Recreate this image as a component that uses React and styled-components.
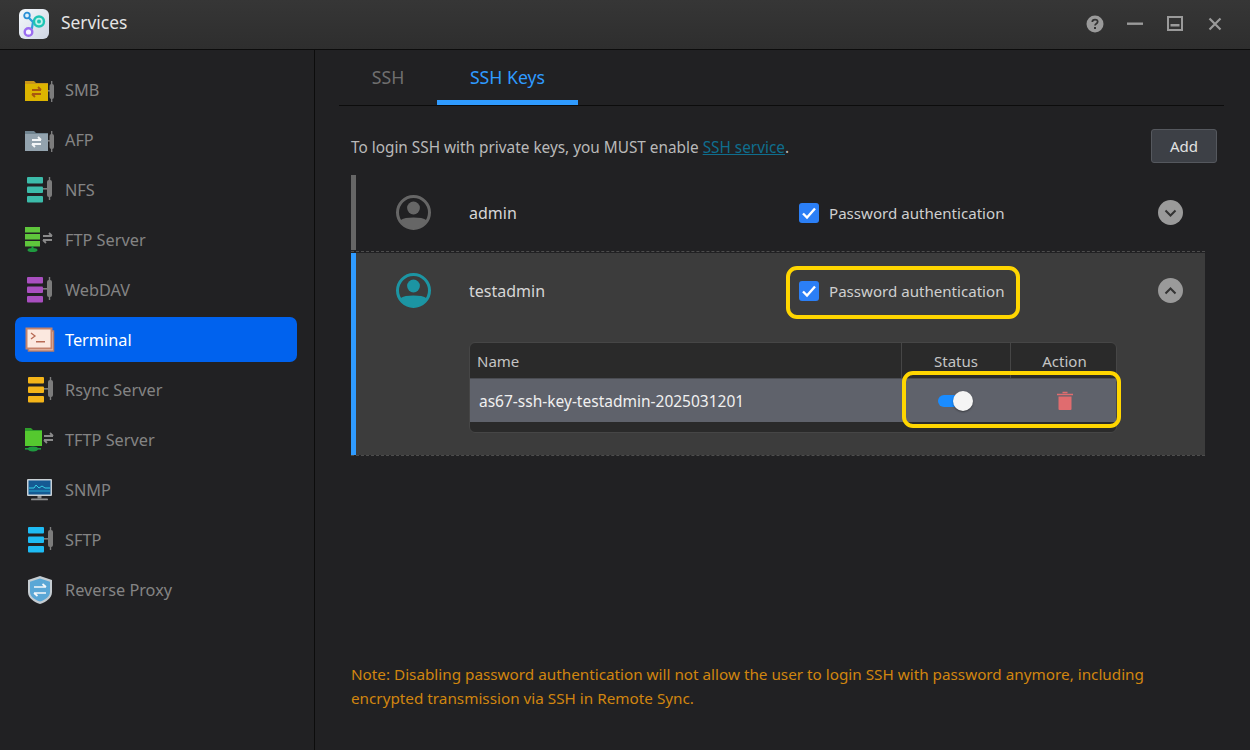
import React from "react";
import styled, { createGlobalStyle } from "styled-components";

const GlobalStyle = createGlobalStyle`
  html, body {
    margin: 0;
    padding: 0;
    background: #212123;
  }
  * {
    box-sizing: border-box;
  }
`;

const Window = styled.div`
  width: 1250px;
  height: 750px;
  display: flex;
  flex-direction: column;
  overflow: hidden;
  background: #212123;
  font-family: "Noto Sans", "Open Sans", sans-serif;
`;

const TitleBar = styled.header`
  height: 50px;
  flex: none;
  display: flex;
  align-items: center;
  padding: 0 15px 1px 19px;
  background: linear-gradient(#363636, #2e2e2e);
  border-bottom: 1px solid #0c0c0c;
`;

const AppName = styled.h1`
  margin: 0 0 4px 12px;
  font-size: 17.4px;
  font-weight: 400;
  color: #e4e4e4;
`;

const WindowControls = styled.div`
  margin-left: auto;
  display: flex;
  align-items: center;
`;

const ControlButton = styled.span`
  width: 40px;
  height: 30px;
  display: flex;
  align-items: center;
  justify-content: center;
`;

const Columns = styled.div`
  flex: 1;
  display: flex;
  min-height: 0;
`;

const Sidebar = styled.nav`
  width: 315px;
  flex: none;
  display: flex;
  flex-direction: column;
  gap: 5px;
  padding: 17px 17px 0 15px;
  border-right: 1px solid #0c0c0c;
`;

const NavItem = styled.div`
  height: 45px;
  display: flex;
  align-items: center;
  gap: 9px;
  padding-left: 9px;
  border-radius: 7px;
  font-size: 16.3px;
  color: ${({ $active }) => ($active ? "#ffffff" : "#848484")};
  background: ${({ $active }) => ($active ? "#0062ee" : "transparent")};
`;

const Main = styled.main`
  flex: 1;
  display: flex;
  flex-direction: column;
  padding: 0 26px 40px 24px;
  min-width: 0;
`;

const Tabs = styled.div`
  display: flex;
  height: 56px;
  flex: none;
  border-bottom: 1px solid #0c0c0c;
`;

const Tab = styled.div`
  height: 55px;
  width: ${({ $active }) => ($active ? "141px" : "98px")};
  display: flex;
  align-items: center;
  justify-content: center;
  padding-top: 4px;
  font-size: 17.7px;
  color: ${({ $active }) => ($active ? "#2f9bff" : "#6f6f6f")};
  border-bottom: 5px solid ${({ $active }) => ($active ? "#2f9bff" : "transparent")};
`;

const Body = styled.div`
  flex: 1;
  display: flex;
  flex-direction: column;
  padding: 0 7px 0 12px;
`;

const Toolbar = styled.div`
  display: flex;
  align-items: center;
  justify-content: space-between;
  margin-top: 23px;
  margin-bottom: 12px;
`;

const Hint = styled.p`
  margin: 0;
  padding-top: 1px;
  font-size: 15.35px;
  color: #b9b9b9;
`;

const HintLink = styled.a`
  color: #0f6e8e;
  text-decoration: underline;
`;

const AddButton = styled.button`
  width: 66px;
  height: 34px;
  border: 1px solid #55585e;
  border-radius: 3px;
  background: #3d4046;
  color: #e2e2e2;
  font-family: inherit;
  font-size: 15px;
`;

const Users = styled.div`
  margin-right: 12px;
`;

const UserRow = styled.section`
  padding-bottom: ${({ $open }) => ($open ? "0" : "1px")};
  margin-bottom: ${({ $open }) => ($open ? "0" : "1px")};
  border-bottom: 1px dashed #4d4d4d;
`;

const UserPanel = styled.div`
  border-left: 5px solid ${({ $open }) => ($open ? "#2f9bff" : "#666666")};
  background: ${({ $open }) => ($open ? "#3c3c3c" : "transparent")};
  padding-bottom: ${({ $open }) => ($open ? "22px" : "0")};
`;

const UserHead = styled.div`
  height: 75px;
  display: flex;
  align-items: center;
  padding: 0 22px 0 40px;
`;

const UserName = styled.div`
  width: 330px;
  margin-left: 38px;
  font-size: 16px;
  color: #d6d6d6;
`;

const CheckField = styled.label`
  position: relative;
  display: flex;
  align-items: center;
  gap: 10px;
  font-size: 15.1px;
  color: #cfcfcf;

  ${({ $marked }) =>
    $marked &&
    `
    &::after {
      content: "";
      position: absolute;
      inset: -15px -16px -18px -13px;
      border: 4px solid #ffd600;
      border-radius: 11px;
    }
  `}
`;

const CheckBox = styled.span`
  width: 20px;
  height: 20px;
  display: flex;
  align-items: center;
  justify-content: center;
  border-radius: 3px;
  background: #2b7ff6;
`;

const RoundToggle = styled.span`
  margin-left: auto;
  width: 25px;
  height: 25px;
  display: flex;
  align-items: center;
  justify-content: center;
  border-radius: 50%;
  background: #9a9a9a;
`;

const KeyTable = styled.div`
  margin: 14px 88px 0 113px;
  height: 91px;
  border: 1px solid #464646;
  border-radius: 6px;
  background: #2a2a2a;
  display: flex;
  flex-direction: column;
`;

const HeadRow = styled.div`
  height: 36px;
  flex: none;
  display: grid;
  grid-template-columns: 431px 109px 1fr;
  border-bottom: 1px solid #4a4c52;
`;

const HeadCell = styled.div`
  display: flex;
  align-items: center;
  justify-content: ${({ $center }) => ($center ? "center" : "flex-start")};
  padding: 1px 0 0 ${({ $pad }) => $pad || "0"};
  font-size: 15px;
  color: #c4c4c4;
  border-left: ${({ $center }) => ($center ? "1px solid #464646" : "none")};
`;

const KeyRow = styled.div`
  height: 43px;
  flex: none;
  display: flex;
  background: #5f626b;
`;

const KeyName = styled.div`
  width: 431px;
  padding: 1px 0 0 9px;
  display: flex;
  align-items: center;
  font-size: 15.5px;
  color: #f0f0f0;
`;

const KeyCells = styled.div`
  position: relative;
  flex: 1;
  display: grid;
  grid-template-columns: 109px 1fr;

  &::after {
    content: "";
    position: absolute;
    inset: -8px -5px -6px 1px;
    border: 4px solid #ffd600;
    border-radius: 11px;
  }
`;

const KeyCell = styled.div`
  display: flex;
  align-items: center;
  justify-content: center;
  padding-left: ${({ $pad }) => $pad || "0"};
`;

const Switch = styled.span`
  position: relative;
  width: 35px;
  height: 12px;
`;

const SwitchTrack = styled.span`
  display: block;
  width: 28px;
  height: 12px;
  border-radius: 6px;
  background: #1a8cff;
`;

const SwitchKnob = styled.span`
  position: absolute;
  top: -4px;
  right: 0;
  width: 20px;
  height: 20px;
  border-radius: 50%;
  background: #f5f5f5;
  box-shadow: 0 1px 2px rgba(0, 0, 0, 0.4);
`;

const Note = styled.p`
  margin: auto 0 0;
  font-size: 15.27px;
  line-height: 24px;
  color: #d1860f;
`;

const IconBox = styled.span`
  width: 32px;
  height: 30px;
  flex: none;
  display: block;

  svg {
    display: block;
  }
`;

const Connector = ({ x = 19 }) => (
  <g fill="#7c7c7c">
    <rect x={x} y="13" width="5" height="1.6" />
    <rect x={x + 4} y="5" width="5" height="17" rx="2" />
    <rect x={x + 5.8} y="2" width="1.4" height="23" />
  </g>
);

const Swap = ({ x = 20, y = 9, color = "#8a8a8a" }) => (
  <g fill="none" stroke={color} strokeWidth="1.8">
    <path d={`M${x} ${y + 3}h9M${x + 6} ${y}l3 3`} />
    <path d={`M${x + 9} ${y + 7}h-9M${x + 3} ${y + 10}l-3-3`} />
  </g>
);

const Stack = ({ color, x = 3 }) => (
  <svg width="32" height="30" viewBox="0 0 32 30">
    <rect x={x} y="2" width="16" height="6.5" rx="1" fill={color} />
    <rect x={x} y="11.5" width="16" height="6.5" rx="1" fill={color} />
    <rect x={x} y="21" width="16" height="6.5" rx="1" fill={color} />
    <Connector x={x + 16} />
  </svg>
);

const FolderShare = ({ body, tab, arrows }) => (
  <svg width="32" height="30" viewBox="0 0 32 30">
    <path d="M1 6h9l2 2h12v4H1z" fill={tab} />
    <rect x="1" y="9" width="23" height="17" fill={body} />
    <Swap x={8} y={12} color={arrows} />
    <g fill="#7c7c7c">
      <rect x="24" y="15" width="2" height="1.6" />
      <rect x="25.5" y="9" width="4.5" height="15" rx="2" />
      <rect x="27" y="6" width="1.4" height="21" />
    </g>
  </svg>
);

const FtpIcon = () => (
  <svg width="32" height="30" viewBox="0 0 32 30">
    <rect x="1" y="2" width="15" height="5.5" fill="#5fc63c" />
    <rect x="1" y="9" width="15" height="5.5" fill="#5fc63c" />
    <rect x="1" y="16" width="15" height="5.5" fill="#5fc63c" />
    <rect x="7.5" y="21" width="2" height="3" fill="#1f9a3f" />
    <ellipse cx="8.5" cy="25" rx="5" ry="2" fill="#1f9a3f" />
    <Swap x={19} y={8} />
  </svg>
);

const TftpIcon = () => (
  <svg width="32" height="30" viewBox="0 0 32 30">
    <path d="M1 3h6l2 2h9v4H1z" fill="#2f9e2b" />
    <rect x="1" y="6" width="17" height="15" fill="#55c92f" />
    <rect x="1" y="23" width="16" height="1.6" fill="#1f9a3f" />
    <ellipse cx="9" cy="24" rx="5" ry="2.4" fill="#1f9a3f" />
    <Swap x={20} y={8} />
  </svg>
);

const TerminalIcon = () => (
  <svg width="32" height="30" viewBox="0 0 32 30">
    <rect x="4.5" y="6" width="25" height="20" fill="#f4d9cc" stroke="#bb7c66" strokeWidth="1.5" />
    <rect x="2.5" y="3.5" width="25" height="20" fill="#fbe8df" stroke="#c4836c" strokeWidth="2" />
    <path d="M7 8l4 3-4 3" fill="none" stroke="#b76b55" strokeWidth="1.3" />
    <rect x="12" y="16" width="9" height="1.5" fill="#b76b55" />
  </svg>
);

const SnmpIcon = () => (
  <svg width="32" height="30" viewBox="0 0 32 30">
    <rect x="3" y="4" width="25" height="17" rx="1" fill="#c9d1d6" />
    <rect x="4.5" y="5.5" width="22" height="14" fill="#155a93" />
    <path d="M5 13h5l2-3 3 3 3-2 3 2h5" fill="none" stroke="#35d0e6" strokeWidth="1" />
    <path d="M5 16h21" stroke="#2aa8d0" strokeWidth="1" />
    <rect x="13.5" y="21" width="4" height="2.5" fill="#8f8f8f" />
    <rect x="7" y="23.5" width="17" height="1.8" rx="0.9" fill="#8f8f8f" />
  </svg>
);

const ShieldIcon = () => (
  <svg width="32" height="30" viewBox="0 0 32 30">
    <path d="M16 1l12 4v12c0 6-6 10-12 12-6-2-12-6-12-12V5z" fill="#c5ccd1" />
    <path d="M16 3.5l10 3.2V17c0 4.6-5 8-10 9.6C11 25 6 21.6 6 17V6.7z" fill="#5aa7d6" />
    <g fill="none" stroke="#f3f7fa" strokeWidth="1.7">
      <path d="M10 12h12M18.5 9l3.5 3" />
      <path d="M22 18H10M13.5 21L10 18" />
    </g>
  </svg>
);

const LogoIcon = () => (
  <svg width="30" height="30" viewBox="0 0 30 30">
    <defs>
      <linearGradient id="logoBg" x1="0" y1="0" x2="1" y2="1">
        <stop offset="0" stopColor="#f4f8fc" />
        <stop offset="1" stopColor="#cfd6e4" />
      </linearGradient>
    </defs>
    <rect width="30" height="30" rx="6" fill="url(#logoBg)" />
    <path d="M8 7l6 6-1 6-3 4M14 13h6" fill="none" stroke="#2f9fd8" strokeWidth="2.2" />
    <circle cx="8" cy="6.5" r="2.8" fill="#dff1fb" stroke="#2a8fd6" strokeWidth="1.8" />
    <circle cx="20" cy="12.5" r="5" fill="#bff2ea" stroke="#1fc4b4" strokeWidth="2.4" />
    <circle cx="20" cy="12.5" r="2" fill="#1fc4b4" />
    <circle cx="9.5" cy="23" r="3.8" fill="#f6f2ff" stroke="#9a6cf0" strokeWidth="2.4" />
  </svg>
);

const UserIcon = ({ color }) => (
  <svg width="35" height="35" viewBox="0 0 35 35" style={{ display: "block" }}>
    <circle cx="17.5" cy="17.5" r="16" fill="none" stroke={color} strokeWidth="3" />
    <circle cx="17.5" cy="13" r="6.4" fill={color} />
    <path d="M4 25.5c3-2.4 8-3 13.5-3s10.5.6 13.5 3c-2.5 5-8 8.5-13.5 8.5S6.5 30.5 4 25.5z" fill={color} />
  </svg>
);

const CheckMark = () => (
  <svg width="16" height="14" viewBox="0 0 16 14">
    <path d="M2 7.5l4 4 8-9" fill="none" stroke="#fff" strokeWidth="2.4" />
  </svg>
);

const Chevron = ({ up, color }) => (
  <svg width="13" height="8" viewBox="0 0 13 8">
    <path d={up ? "M1.5 6.5l5-5 5 5" : "M1.5 1.5l5 5 5-5"} fill="none" stroke={color} strokeWidth="2" />
  </svg>
);

const TrashIcon = () => (
  <svg width="16" height="19" viewBox="0 0 16 19">
    <path d="M5.5 1.5h5M0 3.5h16" stroke="#e06c6f" strokeWidth="1.6" fill="none" />
    <path d="M1.5 5.5h13V18a1 1 0 0 1-1 1h-11a1 1 0 0 1-1-1z" fill="#e06c6f" />
  </svg>
);

const HelpIcon = () => (
  <svg width="18" height="18" viewBox="0 0 18 18">
    <circle cx="9" cy="9" r="8.5" fill="#9a9a9a" />
    <path d="M6.3 7c0-1.6 1.2-2.4 2.7-2.4s2.7.9 2.7 2.2c0 2-2.7 2-2.7 3.8" fill="none" stroke="#333" strokeWidth="1.7" />
    <rect x="8" y="12" width="2" height="2" fill="#333" />
  </svg>
);

const MinimizeIcon = () => (
  <svg width="16" height="4" viewBox="0 0 16 4">
    <rect y="0.5" width="16" height="2.4" fill="#9a9a9a" />
  </svg>
);

const MaximizeIcon = () => (
  <svg width="16" height="16" viewBox="0 0 16 16">
    <rect x="1" y="1" width="14" height="13" fill="none" stroke="#9a9a9a" strokeWidth="2" />
    <rect x="3.5" y="8" width="9" height="2.5" fill="#9a9a9a" />
  </svg>
);

const CloseIcon = () => (
  <svg width="14" height="14" viewBox="0 0 14 14">
    <path d="M1.5 1.5l11 11M12.5 1.5l-11 11" stroke="#9a9a9a" strokeWidth="2.2" />
  </svg>
);

const services = [
  { name: "SMB", icon: <FolderShare body="#dcb400" tab="#c9951a" arrows="#a8570f" /> },
  { name: "AFP", icon: <FolderShare body="#93a3ae" tab="#6f838f" arrows="#f2f5f7" /> },
  { name: "NFS", icon: <Stack color="#3cbcaa" /> },
  { name: "FTP Server", icon: <FtpIcon /> },
  { name: "WebDAV", icon: <Stack color="#a94fc0" /> },
  { name: "Terminal", icon: <TerminalIcon />, active: true },
  { name: "Rsync Server", icon: <Stack color="#f5b519" x={4} /> },
  { name: "TFTP Server", icon: <TftpIcon /> },
  { name: "SNMP", icon: <SnmpIcon /> },
  { name: "SFTP", icon: <Stack color="#1ebcf5" x={4} /> },
  { name: "Reverse Proxy", icon: <ShieldIcon /> },
];

const App = () => {
  return (
    <Window>
      <GlobalStyle />
      <TitleBar>
        <LogoIcon />
        <AppName>Services</AppName>
        <WindowControls>
          <ControlButton><HelpIcon /></ControlButton>
          <ControlButton><MinimizeIcon /></ControlButton>
          <ControlButton><MaximizeIcon /></ControlButton>
          <ControlButton><CloseIcon /></ControlButton>
        </WindowControls>
      </TitleBar>
      <Columns>
        <Sidebar>
          {services.map((s) => (
            <NavItem key={s.name} $active={s.active}>
              <IconBox>{s.icon}</IconBox>
              {s.name}
            </NavItem>
          ))}
        </Sidebar>
        <Main>
          <Tabs>
            <Tab>SSH</Tab>
            <Tab $active>SSH Keys</Tab>
          </Tabs>
          <Body>
            <Toolbar>
              <Hint>
                To login SSH with private keys, you MUST enable <HintLink>SSH service</HintLink>.
              </Hint>
              <AddButton>Add</AddButton>
            </Toolbar>
            <Users>
              <UserRow>
                <UserPanel>
                  <UserHead>
                    <UserIcon color="#666666" />
                    <UserName>admin</UserName>
                    <CheckField>
                      <CheckBox><CheckMark /></CheckBox>
                      Password authentication
                    </CheckField>
                    <RoundToggle><Chevron color="#333333" /></RoundToggle>
                  </UserHead>
                </UserPanel>
              </UserRow>
              <UserRow $open>
                <UserPanel $open>
                  <UserHead>
                    <UserIcon color="#1c95a3" />
                    <UserName>testadmin</UserName>
                    <CheckField $marked>
                      <CheckBox><CheckMark /></CheckBox>
                      Password authentication
                    </CheckField>
                    <RoundToggle><Chevron up color="#333333" /></RoundToggle>
                  </UserHead>
                  <KeyTable>
                    <HeadRow>
                      <HeadCell $pad="7px">Name</HeadCell>
                      <HeadCell $center>Status</HeadCell>
                      <HeadCell $center $pad="2px">Action</HeadCell>
                    </HeadRow>
                    <KeyRow>
                      <KeyName>as67-ssh-key-testadmin-2025031201</KeyName>
                      <KeyCells>
                        <KeyCell>
                          <Switch>
                            <SwitchTrack />
                            <SwitchKnob />
                          </Switch>
                        </KeyCell>
                        <KeyCell $pad="4px"><TrashIcon /></KeyCell>
                      </KeyCells>
                    </KeyRow>
                  </KeyTable>
                </UserPanel>
              </UserRow>
            </Users>
            <Note>
              Note: Disabling password authentication will not allow the user to login SSH with password anymore, including
              <br />
              encrypted transmission via SSH in Remote Sync.
            </Note>
          </Body>
        </Main>
      </Columns>
    </Window>
  );
};

export default App;
